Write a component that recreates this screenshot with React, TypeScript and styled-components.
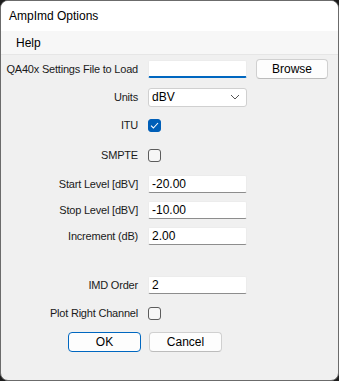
import styled, { createGlobalStyle } from 'styled-components';

const Global = createGlobalStyle`
	html, body {
		margin: 0;
		padding: 0;
		background: #1c1c1c;
	}
	body {
		font-family: "Liberation Sans", Arial, sans-serif;
		font-size: 11px;
		color: #1a1a1a;
	}
`

const Window = styled.div`
	width: 337px;
	height: 379px;
	border: 1px solid #6b6b6b;
	border-radius: 8px;
	overflow: hidden;
	background: #f0f0f0;
	display: flex;
	flex-direction: column;
`

const TitleBar = styled.div`
	height: 30px;
	background: #ffffff;
	display: flex;
	align-items: center;
	padding-left: 8px;
	font-size: 12px;
	color: #000;
`

const MenuBar = styled.div`
	height: 23px;
	background: #f7f7f7;
	border-bottom: 1px solid #e6e6e6;
	display: flex;
	align-items: center;
	padding-left: 15px;
	font-size: 12px;
	color: #000;
`

const Body = styled.div`
	display: flex;
	flex-direction: column;
`

const Row = styled.div<{ $mt: number }>`
	display: grid;
	grid-template-columns: 147px auto;
	align-items: center;
	height: 20px;
	margin-top: ${p => p.$mt}px;
`

const Label = styled.span`
	text-align: right;
	padding-right: 10px;
	white-space: nowrap;
	letter-spacing: -0.2px;
	font-size: 11px;
`

const Controls = styled.div`
	display: flex;
	align-items: center;
	gap: 9px;
`

const TextBox = styled.div<{ $focus?: boolean }>`
	box-sizing: border-box;
	width: 99px;
	height: 18px;
	background: #fff;
	border: 1px solid #ececec;
	border-bottom: ${p => p.$focus ? '2px solid #0067c0' : '1px solid #8d8d8d'};
	border-radius: 2px;
	padding: 0 3px;
	display: flex;
	align-items: center;
	font-size: 12px;
	color: #000;
`

const Combo = styled.div`
	box-sizing: border-box;
	width: 99px;
	height: 19px;
	background: #fff;
	border: 1px solid #d0d0d0;
	border-radius: 3px;
	padding: 0 6px 0 3px;
	display: flex;
	align-items: center;
	justify-content: space-between;
	font-size: 12px;
	color: #000;
`

const Check = styled.div<{ $on?: boolean }>`
	box-sizing: border-box;
	width: 13px;
	height: 13px;
	border-radius: 3px;
	border: 1px solid ${p => p.$on ? '#005fb8' : '#5c5c5c'};
	background: ${p => p.$on ? '#005fb8' : '#f6f6f6'};
	display: flex;
	align-items: center;
	justify-content: center;
`

const Button = styled.div<{ $primary?: boolean; $w: number }>`
	box-sizing: border-box;
	width: ${p => p.$w}px;
	height: 20px;
	background: #fdfdfd;
	border: 1px solid ${p => p.$primary ? '#0067c0' : '#d0d0d0'};
	border-bottom-color: ${p => p.$primary ? '#0067c0' : '#bcbcbc'};
	border-radius: 4px;
	display: flex;
	align-items: center;
	justify-content: center;
	font-size: 12px;
	color: #000;
`

const ButtonRow = styled.div`
	display: flex;
	gap: 8px;
	margin-top: 9px;
	padding-left: 67px;
`

function Chevron() {
	return (
		<svg width="10" height="6" viewBox="0 0 10 6">
			<path d="M1 1 L5 5 L9 1" fill="none" stroke="#555" strokeWidth="1" />
		</svg>
	);
}

function Tick() {
	return (
		<svg width="9" height="7" viewBox="0 0 9 7">
			<path d="M1 3.6 L3.4 6 L8 1" fill="none" stroke="#fff" strokeWidth="1.1" />
		</svg>
	);
}

function App() {
	return (
		<>
			<Global />
			<Window>
				<TitleBar>AmpImd Options</TitleBar>
				<MenuBar>Help</MenuBar>
				<Body>
					<Row $mt={4}>
						<Label>QA40x Settings File to Load</Label>
						<Controls>
							<TextBox $focus />
							<Button $w={72}>Browse</Button>
						</Controls>
					</Row>
					<Row $mt={8}>
						<Label>Units</Label>
						<Controls>
							<Combo>dBV<Chevron /></Combo>
						</Controls>
					</Row>
					<Row $mt={8}>
						<Label>ITU</Label>
						<Controls><Check $on><Tick /></Check></Controls>
					</Row>
					<Row $mt={10}>
						<Label>SMPTE</Label>
						<Controls><Check /></Controls>
					</Row>
					<Row $mt={9}>
						<Label>Start Level [dBV]</Label>
						<Controls><TextBox>-20.00</TextBox></Controls>
					</Row>
					<Row $mt={6}>
						<Label>Stop Level [dBV]</Label>
						<Controls><TextBox>-10.00</TextBox></Controls>
					</Row>
					<Row $mt={6}>
						<Label>Increment (dB)</Label>
						<Controls><TextBox>2.00</TextBox></Controls>
					</Row>
					<Row $mt={29}>
						<Label>IMD Order</Label>
						<Controls><TextBox>2</TextBox></Controls>
					</Row>
					<Row $mt={8}>
						<Label>Plot Right Channel</Label>
						<Controls><Check /></Controls>
					</Row>
					<ButtonRow>
						<Button $primary $w={73}>OK</Button>
						<Button $w={73}>Cancel</Button>
					</ButtonRow>
				</Body>
			</Window>
		</>
	);
}

export default App;
